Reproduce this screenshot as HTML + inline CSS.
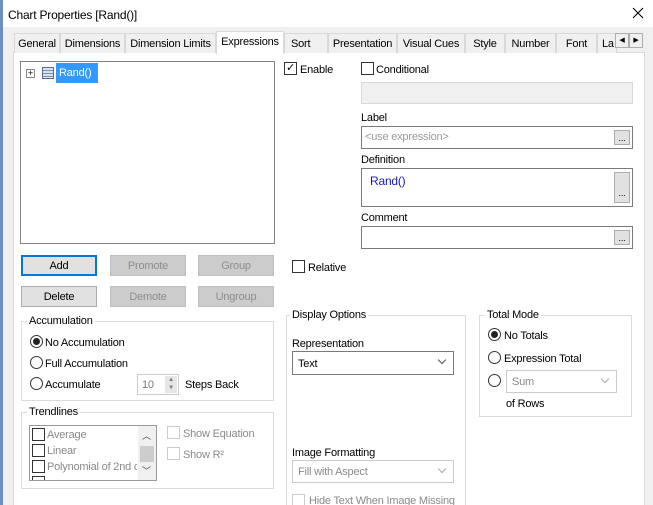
<!DOCTYPE html>
<html><head><style>
*{box-sizing:border-box}
html,body{overflow:hidden}
body{margin:0;width:653px;height:505px;background:#f0f0f0;font-family:"Liberation Sans",sans-serif;font-size:11px;letter-spacing:-0.2px;color:#000;position:relative}
.a{position:absolute;white-space:nowrap}
.t{padding-top:2px}
.tab{position:absolute;top:33px;height:20px;border:1px solid #d9d9d9;border-bottom:none;background:#f0f0f0;text-align:center;line-height:21px;font-size:11px;white-space:nowrap}
.box{position:absolute;border:1px solid #7a7a7a;background:#fff}
.btn{position:absolute;width:76px;height:21px;background:#e1e1e1;border:1px solid #adadad;text-align:center;line-height:20px}
.dis{background:#cccccc;border-color:#bfbfbf;color:#8d8d8d}
.grp{position:absolute;border:1px solid #dcdcdc}
.gl{position:absolute;top:-8px;left:6px;background:#fff;padding:0 2px;white-space:nowrap}
.cb{position:absolute;width:13px;height:13px;border:1px solid #333;background:#fff}
.rb{position:absolute;width:13px;height:13px;border:1px solid #333;border-radius:50%;background:#fff}
.dot:after{content:"";position:absolute;left:2px;top:2px;width:7px;height:7px;border-radius:50%;background:#222}
.el{position:absolute;right:2px;top:3px;width:16px;bottom:3px;background:#e1e1e1;border:1px solid #adadad;font-size:9px;text-align:center;line-height:22px}
.chev{position:absolute;right:8px;top:5px;width:6px;height:6px;border-right:1px solid #555;border-bottom:1px solid #555;transform:rotate(45deg)}
</style></head><body>
<div class="a" style="left:0;top:0;width:653px;height:27px;background:#fff"></div>
<div class="a" style="left:0;top:0;width:3px;height:505px;background:#6b8fbf"></div>
<div class="a" style="left:8px;top:8px;font-size:12px">Chart Properties [Rand()]</div>
<svg class="a" style="left:632px;top:7px" width="12" height="12"><path d="M1 1L11 11M11 1L1 11" stroke="#000" stroke-width="1.1"/></svg>

<div class="a" style="left:13px;top:52px;width:632px;height:460px;background:#fff;border:1px solid #d9d9d9"></div>
<div class="tab" style="left:14px;width:46px">General</div>
<div class="tab" style="left:60px;width:65px">Dimensions</div>
<div class="tab" style="left:125px;width:91px">Dimension Limits</div>
<div class="tab" style="left:216px;top:31px;height:23px;width:68px;background:#fff;line-height:21px">Expressions</div>
<div class="tab" style="left:284px;width:44px;text-align:left;padding-left:6px">Sort</div>
<div class="tab" style="left:328px;width:69px">Presentation</div>
<div class="tab" style="left:397px;width:68px">Visual Cues</div>
<div class="tab" style="left:465px;width:40px">Style</div>
<div class="tab" style="left:505px;width:51px">Number</div>
<div class="tab" style="left:556px;width:41px">Font</div>
<div class="tab" style="left:597px;width:20px;text-align:left;padding-left:4px;overflow:hidden">La</div>
<div class="a" style="left:615px;top:33px;width:14px;height:15px;border:1px solid #adadad;background:#f0f0f0;font-size:7px;text-align:center;line-height:13px">◀</div>
<div class="a" style="left:629px;top:33px;width:14px;height:15px;border:1px solid #adadad;background:#f0f0f0;font-size:7px;text-align:center;line-height:13px">▶</div>

<div class="box" style="left:20px;top:61px;width:255px;height:183px;border-color:#828282"></div>
<div class="a" style="left:26px;top:69px;width:9px;height:9px;border:1px solid #888;font-size:9px;line-height:7px;text-align:center">+</div>
<div class="a" style="left:42px;top:67px;width:12px;height:12px;border:1px solid #5a6d8a;background:repeating-linear-gradient(#dbe3ef 0 2px,#7d8fa9 2px 3px)"></div>
<div class="a" style="left:56px;top:63px;width:42px;height:20px;background:#3399ff;color:#fff;line-height:21px;padding-left:3px">Rand()</div>

<div class="cb" style="left:284px;top:62px;font-size:11px;line-height:10px;text-align:center">✓</div>
<div class="a t" style="left:300px;top:62px">Enable</div>
<div class="cb" style="left:361px;top:62px"></div>
<div class="a t" style="left:376px;top:62px">Conditional</div>
<div class="a" style="left:361px;top:82px;width:272px;height:22px;background:#f0f0f0;border:1px solid #d9d9d9"></div>
<div class="a t" style="left:361px;top:110px">Label</div>
<div class="box" style="left:361px;top:126px;width:272px;height:23px"><span class="a" style="left:3px;top:4px;color:#9a9a9a">&lt;use expression&gt;</span><div class="el" style="line-height:14px">...</div></div>
<div class="a t" style="left:361px;top:152px">Definition</div>
<div class="box" style="left:361px;top:168px;width:272px;height:39px"><span class="a" style="left:8px;top:5px;color:#1a1ab0;font-size:12px">Rand()</span><div class="el" style="line-height:40px">...</div></div>
<div class="a t" style="left:361px;top:210px">Comment</div>
<div class="box" style="left:361px;top:226px;width:272px;height:23px"><div class="el" style="line-height:14px">...</div></div>

<div class="btn" style="left:21px;top:255px;border:2px solid #0078d7;line-height:18px">Add</div>
<div class="btn dis" style="left:110px;top:255px">Promote</div>
<div class="btn dis" style="left:198px;top:255px">Group</div>
<div class="btn" style="left:21px;top:286px">Delete</div>
<div class="btn dis" style="left:110px;top:286px">Demote</div>
<div class="btn dis" style="left:198px;top:286px">Ungroup</div>
<div class="cb" style="left:292px;top:260px"></div>
<div class="a t" style="left:308px;top:260px">Relative</div>

<div class="grp" style="left:21px;top:321px;width:253px;height:80px"><span class="gl" style="left:5px;top:-7px">Accumulation</span></div>
<div class="rb dot" style="left:30px;top:335px"></div><div class="a t" style="left:45px;top:335px">No Accumulation</div>
<div class="rb" style="left:30px;top:356px"></div><div class="a t" style="left:45px;top:356px">Full Accumulation</div>
<div class="rb" style="left:30px;top:377px"></div><div class="a t" style="left:45px;top:377px">Accumulate</div>
<div class="a" style="left:137px;top:374px;width:42px;height:21px;border:1px solid #ccc;color:#777;padding:4px 0 0 4px">10</div>
<div class="a" style="left:165px;top:376px;width:12px;height:17px;background:#e6e6e6;font-size:6px;text-align:center;color:#777;line-height:8px">▲<br>▼</div>
<div class="a t" style="left:185px;top:377px">Steps Back</div>

<div class="grp" style="left:21px;top:412px;width:253px;height:77px"><span class="gl" style="left:5px;top:-7px">Trendlines</span></div>
<div class="a" style="left:29px;top:425px;width:128px;height:56px;border:1px solid #999;overflow:hidden;color:#8a8a8a">
<div class="a" style="left:108px;top:0;width:18px;height:56px;background:#f0f0f0"></div>
<div class="a" style="left:110px;top:20px;width:14px;height:16px;background:#cdcdcd"></div>
<div class="a" style="left:112px;top:3px;font-size:9px;color:#444">︿</div>
<div class="a" style="left:112px;top:38px;font-size:9px;color:#444">﹀</div>
<div class="cb" style="left:2px;top:2px"></div><span class="a" style="left:17px;top:3px">Average</span>
<div class="cb" style="left:2px;top:18px"></div><span class="a" style="left:17px;top:19px">Linear</span>
<div class="cb" style="left:2px;top:34px"></div><span class="a" style="left:17px;top:35px;width:90px;overflow:hidden">Polynomial of 2nd d</span>
<div class="cb" style="left:2px;top:50px"></div>
</div>
<div class="cb" style="left:167px;top:426px;border-color:#ccc"></div><div class="a t" style="left:183px;top:426px;color:#8a8a8a">Show Equation</div>
<div class="cb" style="left:167px;top:447px;border-color:#ccc"></div><div class="a t" style="left:183px;top:447px;color:#8a8a8a">Show R²</div>

<div class="grp" style="left:286px;top:315px;width:180px;height:200px"><span class="gl" style="left:3px;top:-7px">Display Options</span></div>
<div class="a t" style="left:292px;top:336px">Representation</div>
<div class="a" style="left:292px;top:351px;width:162px;height:24px;border:1px solid #7a7a7a;background:#fff;padding:6px 0 0 5px">Text<div class="chev"></div></div>
<div class="a t" style="left:292px;top:445px">Image Formatting</div>
<div class="a" style="left:292px;top:460px;width:162px;height:23px;border:1px solid #ccc;background:#fff;padding:5px 0 0 5px;color:#8a8a8a">Fill with Aspect<div class="chev" style="border-color:#aaa"></div></div>
<div class="cb" style="left:292px;top:494px;border-color:#ccc"></div><div class="a t" style="left:309px;top:493px;color:#8a8a8a">Hide Text When Image Missing</div>

<div class="grp" style="left:479px;top:315px;width:153px;height:102px"><span class="gl" style="left:5px;top:-7px">Total Mode</span></div>
<div class="rb dot" style="left:488px;top:328px"></div><div class="a t" style="left:504px;top:328px">No Totals</div>
<div class="rb" style="left:488px;top:351px"></div><div class="a t" style="left:504px;top:351px">Expression Total</div>
<div class="rb" style="left:488px;top:374px"></div>
<div class="a" style="left:506px;top:370px;width:111px;height:23px;border:1px solid #ccc;background:#fff;padding:5px 0 0 5px;color:#8a8a8a">Sum<div class="chev" style="border-color:#aaa"></div></div>
<div class="a t" style="left:506px;top:396px">of Rows</div>
</body></html>
